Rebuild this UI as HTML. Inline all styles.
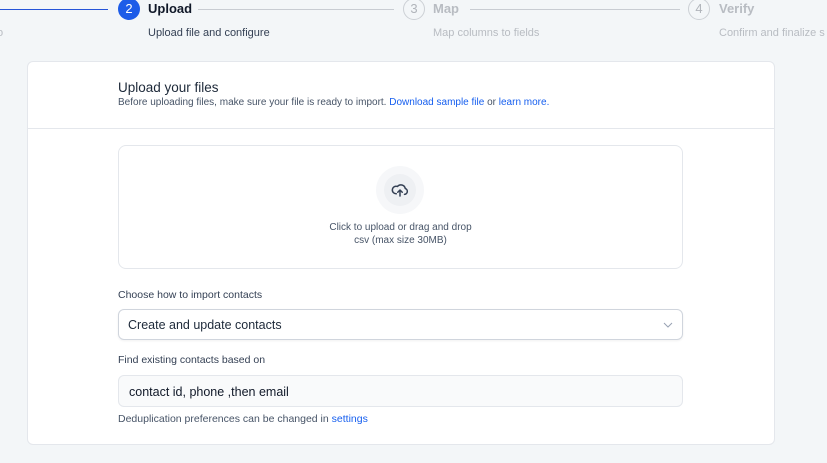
<!DOCTYPE html>
<html><head><style>
body{margin:0;width:827px;height:463px;background:#f3f6f8;font-family:"Liberation Sans",sans-serif;position:relative;overflow:hidden;color:#101828}
.a{position:absolute}
.line{position:absolute;height:1px;background:#c8ccd2}
.circ{position:absolute;width:22px;height:22px;border-radius:50%;box-sizing:border-box;text-align:center;line-height:20px;font-size:13px}
.card{position:absolute;left:27px;top:61px;width:746px;height:382px;background:#fff;border:1px solid #e4e7ec;border-radius:6px}
.lbl{font-size:10.5px;color:#344054}
a{color:#155eef;text-decoration:none}
</style></head><body>
<div class="line" style="left:0;top:9px;width:108px;background:#2554d8"></div>
<div class="circ" style="left:118px;top:-2px;background:#1d5ce8;color:#fff;line-height:22px">2</div>
<div class="a" style="left:148px;top:1px;font-size:13px;font-weight:bold">Upload</div>
<div class="line" style="left:198px;top:9px;width:196px"></div>
<div class="circ" style="left:403px;top:-2px;border:1px solid #ccd0d5;color:#b0b4ba">3</div>
<div class="a" style="left:433px;top:1px;font-size:13px;font-weight:bold;color:#b8bcc2">Map</div>
<div class="line" style="left:470px;top:9px;width:210px"></div>
<div class="circ" style="left:688px;top:-2px;border:1px solid #ccd0d5;color:#b0b4ba">4</div>
<div class="a" style="left:719px;top:1px;font-size:13px;font-weight:bold;color:#b8bcc2">Verify</div>
<div class="a" style="left:-3px;top:27px;font-size:11px;color:#b8bcc2">o</div>
<div class="a" style="left:148px;top:27px;font-size:11px;color:#344054">Upload file and configure</div>
<div class="a" style="left:433px;top:27px;font-size:11px;color:#b8bcc2">Map columns to fields</div>
<div class="a" style="left:719px;top:27px;font-size:11px;color:#b8bcc2;white-space:nowrap">Confirm and finalize s</div>
<div class="card">
<div class="a" style="left:90px;top:18px;font-size:13.5px;color:#1d2939">Upload your files</div>
<div class="a" style="left:90px;top:35px;font-size:10px;color:#475467;white-space:nowrap">Before uploading files, make sure your file is ready to import. <a>Download sample file</a> or <a>learn more.</a></div>
<div class="a" style="left:0;top:66px;width:746px;height:1px;background:#e4e7ec"></div>
<div class="a" style="left:90px;top:83px;width:565px;height:124px;border:1px solid #e4e7ec;border-radius:8px;box-sizing:border-box">
<div class="a" style="left:257px;top:20px;width:48px;height:48px;border-radius:50%;background:#f6f7f9"></div>
<div class="a" style="left:265px;top:28px;width:32px;height:32px;border-radius:50%;background:#eef0f3"></div>
<svg class="a" style="left:272px;top:35px" width="18" height="18" viewBox="0 0 24 24" fill="none" stroke="#344054" stroke-width="2" stroke-linecap="round" stroke-linejoin="round"><path d="M7 17a5 5 0 1 1 1.5-9.7A6 6 0 0 1 19 10a4 4 0 0 1-1 7.8"/><path d="M12 20v-8M9 15l3-3 3 3"/></svg>
<div class="a" style="left:0;width:100%;top:75px;text-align:center;font-size:10px;color:#475467;line-height:13px">Click to upload or drag and drop<br>csv (max size 30MB)</div>
</div>
<div class="a lbl" style="left:90px;top:227px">Choose how to import contacts</div>
<div class="a" style="left:90px;top:247px;width:565px;height:31px;border:1px solid #d0d5dd;border-radius:6px;box-sizing:border-box;box-shadow:0 1px 2px rgba(16,24,40,.06)">
<div class="a" style="left:9px;top:8px;font-size:12.5px;color:#1d2939">Create and update contacts</div>
<svg class="a" style="left:544px;top:11px" width="10" height="8" viewBox="0 0 10 8"><path d="M1 2l4 4 4-4" fill="none" stroke="#98a2b3" stroke-width="1"/></svg>
</div>
<div class="a lbl" style="left:90px;top:292px">Find existing contacts based on</div>
<div class="a" style="left:90px;top:313px;width:565px;height:32px;border:1px solid #e4e7ec;border-radius:6px;box-sizing:border-box;background:#f9fafb">
<div class="a" style="left:10px;top:9px;font-size:12.5px;color:#101828">contact id, phone ,then email</div>
</div>
<div class="a" style="left:90px;top:351px;font-size:10.5px;color:#475467">Deduplication preferences can be changed in <a>settings</a></div>
</div>
</body></html>
